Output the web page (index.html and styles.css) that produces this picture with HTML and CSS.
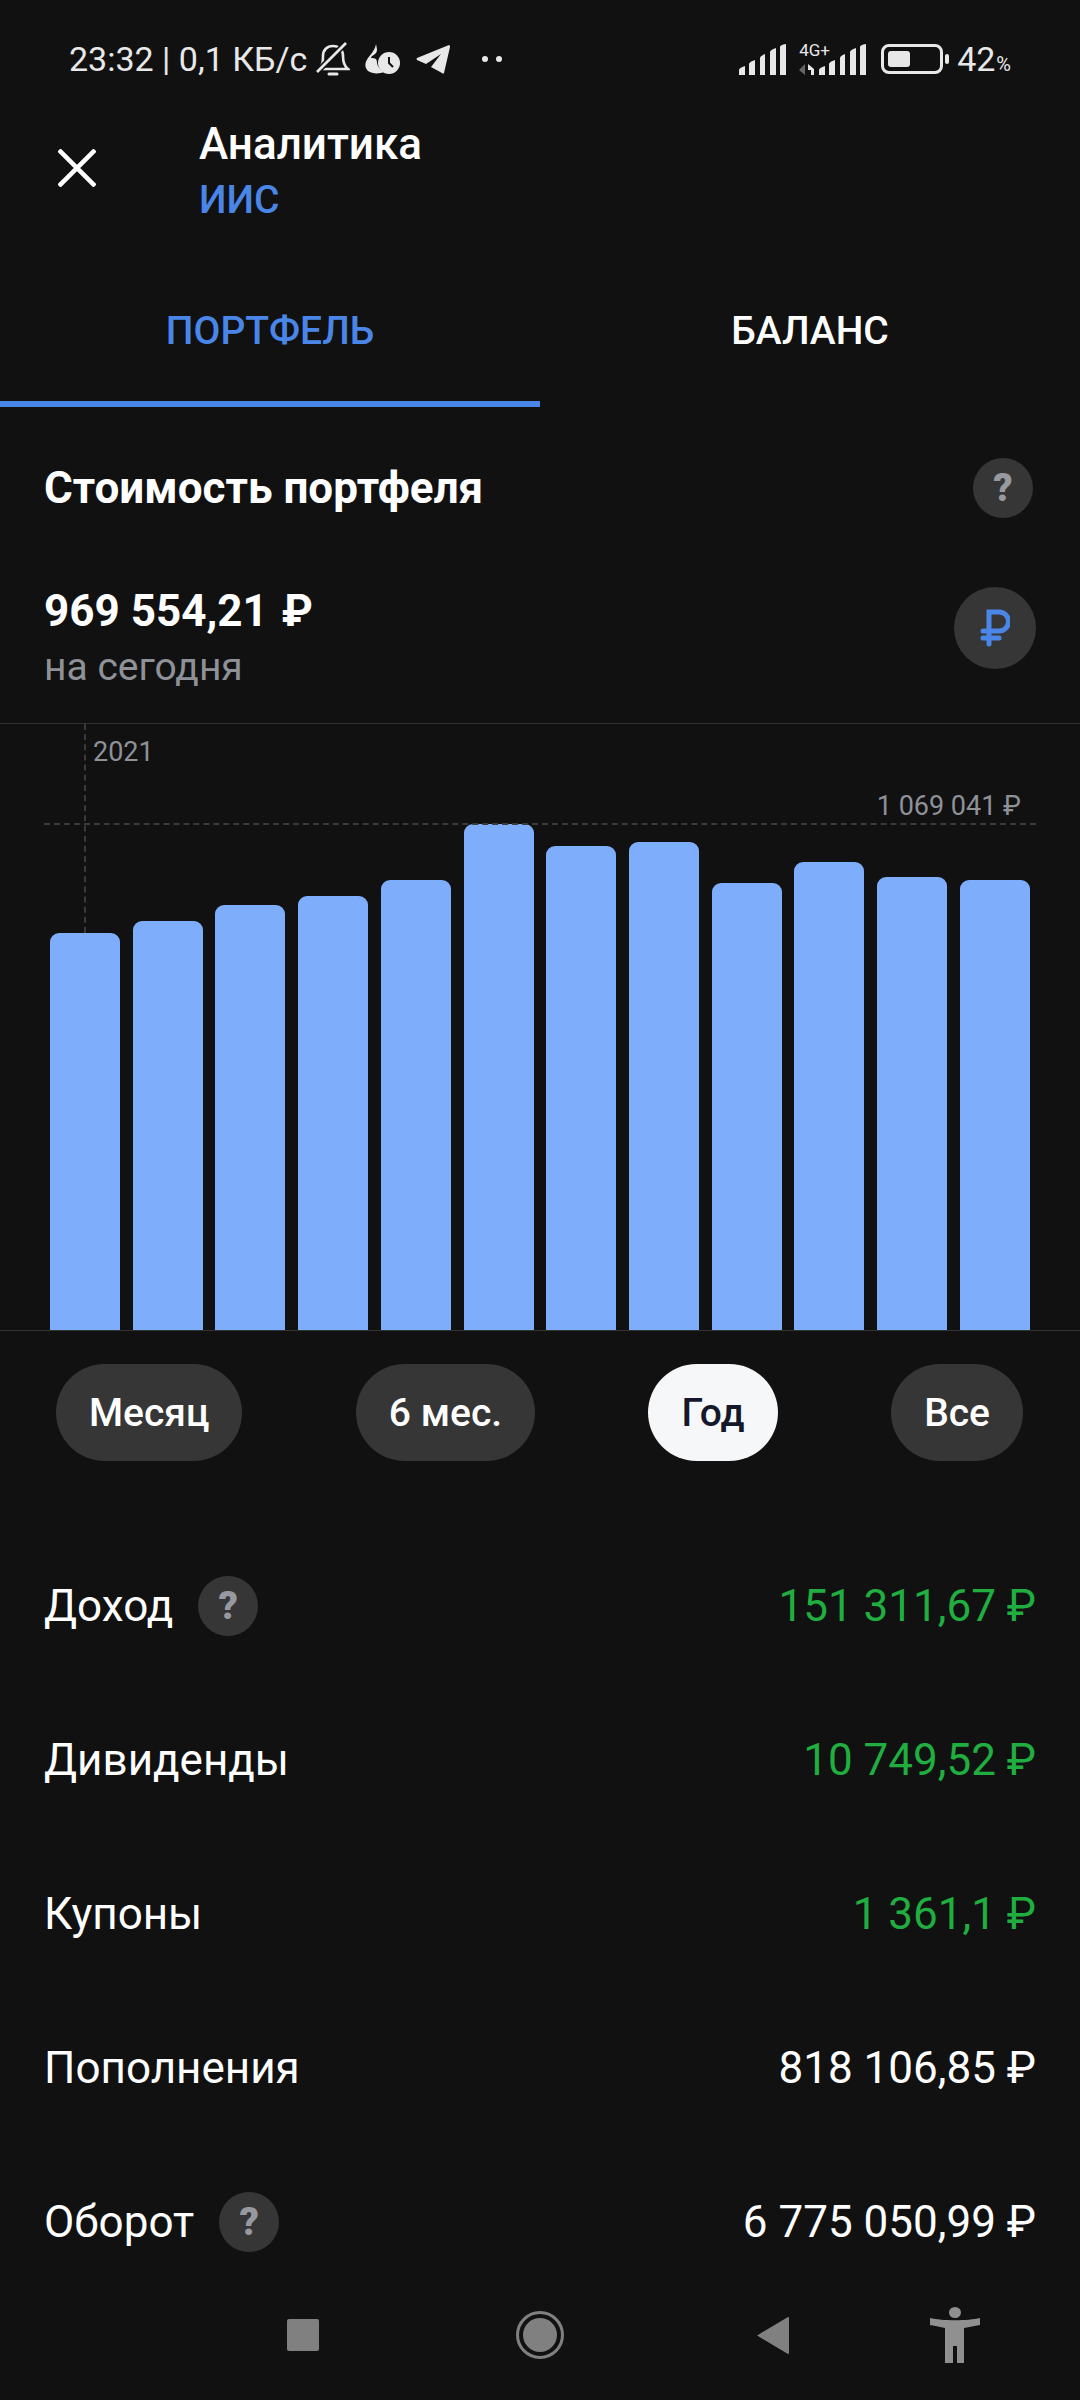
FILE: index.html
```html
<!DOCTYPE html>
<html lang="ru">
<head>
    <meta charset="UTF-8">
    <meta name="viewport" content="width=device-width, initial-scale=1.0">
    <title>Аналитика</title>
    <link rel="stylesheet" href="styles.css">
</head>
<body>
    <div class="status">
        <div class="status-left">
            <span class="status-text">23:32 | 0,1 КБ/с</span>
            <svg class="ic-bell" width="34" height="35" viewBox="0 0 34 35" fill="none" stroke="#e8e8e8" stroke-width="2.6">
                <path d="M3 27 C7 23 7 19 7 14 C7 8 11 4 17 4 C23 4 27 8 27 14 C27 20 28 24 32 27 Z"/>
                <path d="M13 32 H21" stroke-width="3" stroke-linecap="round"/>
                <path d="M1 30 L30 1" stroke="#111112" stroke-width="6"/>
                <path d="M1 30 L30 1"/>
            </svg>
            <svg class="ic-drops" width="36" height="30" viewBox="0 0 36 30">
                <path d="M11 0 C12 5 13 7 10 10 C6 13 5 14 7 14 C12 14 12 17 12 19 C13 24 16 26 19 28 C15 30 7 30 3 27 C-1 23 0 18 3 14 C6 10 10 6 11 0 Z" fill="#e8e8e8"/>
                <circle cx="24" cy="19" r="11" fill="#e8e8e8"/>
                <path d="M24 13 V19 L28 23" fill="none" stroke="#111112" stroke-width="2"/>
            </svg>
            <svg class="ic-plane" width="34" height="29" viewBox="0 0 34 29">
                <path d="M1 13 L33 0 Q34 0 34 2 L28 28 Q27 29 26 28 L15 22 L25 9 L10 19 L1 15 Q0 14 1 13 Z" fill="#e8e8e8"/>
            </svg>
            <span class="dots"><i></i><i></i></span>
        </div>
        <div class="status-right">
            <svg class="ic-signal" width="47" height="31" viewBox="0 0 47 31" fill="#e8e8e8">
                <path d="M0 31 V26 Q0 24 6 22 V31 Z M10 31 V20 Q10 18 16 16 V31 Z M21 31 V14 Q21 12 26 10 V31 Z M31 31 V8 Q31 6 37 4 V31 Z M41 31 V3 Q41 1 47 0 V31 Z"/>
            </svg>
            <div class="net">
                <span class="net-label">4G+</span>
                <svg width="15" height="11" viewBox="0 0 15 11">
                    <path d="M0 6 L6 0 V11 Z" fill="#666"/>
                    <path d="M9 0 L15 5 V11 H12 V6 H9 Z" fill="#e8e8e8"/>
                </svg>
            </div>
            <svg class="ic-signal" width="47" height="31" viewBox="0 0 47 31" fill="#e8e8e8">
                <path d="M0 31 V26 Q0 24 6 22 V31 Z M10 31 V20 Q10 18 16 16 V31 Z M21 31 V14 Q21 12 26 10 V31 Z M31 31 V8 Q31 6 37 4 V31 Z M41 31 V3 Q41 1 47 0 V31 Z"/>
            </svg>
            <div class="battery"><div class="battery-fill"></div></div>
            <div class="battery-tip"></div>
            <span class="status-text batt-num">42<small>%</small></span>
        </div>
    </div>

    <div class="header">
        <svg class="close" width="38" height="38" viewBox="0 0 38 38" stroke="#fff" stroke-width="4.5">
            <path d="M1 1 L37 37 M37 1 L1 37"/>
        </svg>
        <div class="header-text">
            <div class="title">Аналитика</div>
            <div class="subtitle">ИИС</div>
        </div>
    </div>

    <div class="tabs">
        <div class="tab active">ПОРТФЕЛЬ</div>
        <div class="tab">БАЛАНС</div>
    </div>

    <div class="section-head">
        <h2>Стоимость портфеля</h2>
        <div class="help">?</div>
    </div>

    <div class="summary">
        <div>
            <div class="total">969 554,21 <span class="total-rub">₽</span></div>
            <div class="muted">на сегодня</div>
        </div>
        <div class="currency">
            <svg width="30" height="38" viewBox="0 0 30 38" fill="none" stroke="#4a86e8" stroke-width="5" stroke-linecap="round">
                <path d="M9 35 V3 H19 A9.5 9.5 0 0 1 19 22 H3 M3 29 H19"/>
            </svg>
        </div>
    </div>

    <div class="chart">
        <div class="v-line"></div>
        <div class="h-line"></div>
        <span class="year">2021</span>
        <span class="max">1 069 041 ₽</span>
        <div class="bars">
            <div class="bar" style="height: 397px"></div>
            <div class="bar" style="height: 409px"></div>
            <div class="bar" style="height: 425px"></div>
            <div class="bar" style="height: 434px"></div>
            <div class="bar" style="height: 450px"></div>
            <div class="bar" style="height: 506px"></div>
            <div class="bar" style="height: 484px"></div>
            <div class="bar" style="height: 488px"></div>
            <div class="bar" style="height: 447px"></div>
            <div class="bar" style="height: 468px"></div>
            <div class="bar" style="height: 453px"></div>
            <div class="bar" style="height: 450px"></div>
        </div>
    </div>

    <div class="periods">
        <div class="pill">Месяц</div>
        <div class="pill">6 мес.</div>
        <div class="pill selected">Год</div>
        <div class="pill">Все</div>
    </div>

    <div class="rows">
        <div class="row">
            <div class="row-label">Доход <div class="help">?</div></div>
            <div class="amount green">151 311,67 ₽</div>
        </div>
        <div class="row">
            <div class="row-label">Дивиденды</div>
            <div class="amount green">10 749,52 ₽</div>
        </div>
        <div class="row">
            <div class="row-label">Купоны</div>
            <div class="amount green">1 361,1 ₽</div>
        </div>
        <div class="row">
            <div class="row-label">Пополнения</div>
            <div class="amount">818 106,85 ₽</div>
        </div>
        <div class="row">
            <div class="row-label">Оборот <div class="help">?</div></div>
            <div class="amount">6 775 050,99 ₽</div>
        </div>
    </div>

    <div class="navbar">
        <div class="nav-square"></div>
        <svg class="nav-home" width="48" height="50" viewBox="0 0 48 50">
            <circle cx="24" cy="25" r="22.5" fill="none" stroke="#808080" stroke-width="3"/>
            <circle cx="24" cy="25" r="17" fill="#808080"/>
        </svg>
        <svg class="nav-back" width="32" height="37" viewBox="0 0 32 37">
            <path d="M0 18.5 L31 0 Q32 0 32 1 V36 Q32 37 31 37 Z" fill="#808080"/>
        </svg>
        <svg class="nav-person" width="50" height="56" viewBox="0 0 50 56" fill="#909090">
            <ellipse cx="25" cy="5.5" rx="6" ry="5.5"/>
            <path d="M0 11 C12 14 38 14 50 11 L50 18 C44 19 40 20 34 21 L34 56 L27 56 L27 39 L23 39 L23 56 L15 56 L15 21 C10 20 6 19 0 18 Z"/>
        </svg>
    </div>
</body>
</html>
```

FILE: styles.css
```css
* {
    box-sizing: border-box;
}
body {
    margin: 0;
    width: 1080px;
    height: 2400px;
    overflow: hidden;
    background: #111112;
    color: #fff;
    font-family: Roboto, "Noto Sans", sans-serif;
}

/* status bar */
.status {
    height: 118px;
    padding: 0 69px;
    display: flex;
    justify-content: space-between;
    align-items: center;
}
.status-left, .status-right {
    display: flex;
    align-items: center;
}
.status-text {
    font-size: 34px;
    color: #e8e8e8;
    white-space: nowrap;
}
.ic-bell {
    margin-left: 9px;
}
.ic-drops {
    margin-left: 15px;
}
.ic-plane {
    margin-left: 15px;
}
.dots {
    display: flex;
    gap: 8px;
    margin-left: 32px;
}
.dots i {
    width: 6px;
    height: 6px;
    border-radius: 50%;
    background: #e8e8e8;
}
.net {
    width: 15px;
    height: 31px;
    margin-left: 13px;
    margin-right: 5px;
    display: flex;
    flex-direction: column;
    justify-content: space-between;
}
.net-label {
    font-size: 17px;
    line-height: 13px;
    color: #e8e8e8;
    white-space: nowrap;
}
.battery {
    width: 62px;
    height: 30px;
    margin-left: 15px;
    padding: 4px;
    border: 3px solid #e8e8e8;
    border-radius: 8px;
}
.battery-fill {
    width: 22px;
    height: 100%;
    border-radius: 3px;
    background: #e8e8e8;
}
.battery-tip {
    width: 4px;
    height: 10px;
    margin-left: 2px;
    border-radius: 2px;
    background: #e8e8e8;
}
.batt-num {
    margin-left: 8px;
}
.batt-num small {
    font-size: 20px;
    margin-left: 1px;
}

/* header */
.header {
    height: 152px;
    padding-left: 58px;
    display: flex;
    align-items: flex-start;
}
.close {
    margin-top: 31px;
    margin-right: 103px;
}
.title {
    margin-top: -2px;
    font-size: 44px;
    font-weight: 500;
    line-height: 56px;
}
.subtitle {
    font-size: 39px;
    font-weight: 500;
    line-height: 56px;
    color: #4a86e8;
}

/* tabs */
.tabs {
    height: 137px;
    display: flex;
}
.tab {
    flex: 1;
    padding-top: 39px;
    text-align: center;
    font-size: 39px;
    font-weight: 500;
    line-height: 44px;
}
.tab.active {
    color: #4a86e8;
    border-bottom: 6px solid #4a86e8;
}

/* portfolio summary */
.section-head {
    height: 162px;
    padding: 0 47px 0 44px;
    display: flex;
    justify-content: space-between;
    align-items: center;
}
.section-head h2 {
    margin: 0;
    font-size: 44px;
    font-weight: 700;
}
.help {
    width: 60px;
    height: 60px;
    border-radius: 50%;
    background: #363636;
    color: #96999f;
    font-size: 38px;
    font-weight: 900;
    display: flex;
    justify-content: center;
    align-items: center;
}
.summary {
    height: 155px;
    padding: 0 44px;
    display: flex;
    justify-content: space-between;
    align-items: flex-start;
    border-bottom: 1px solid #333;
}
.total {
    margin-top: 14px;
    font-size: 44px;
    font-weight: 700;
    line-height: 56px;
}
.total-rub {
    margin-left: 3px;
}
.muted {
    font-size: 39px;
    line-height: 56px;
    color: #8e9197;
}
.currency {
    width: 82px;
    height: 82px;
    margin-top: 18px;
    border-radius: 50%;
    background: #363636;
    display: flex;
    justify-content: center;
    align-items: center;
}

/* chart */
.chart {
    position: relative;
    height: 607px;
    border-bottom: 1px solid #333;
}
.v-line {
    position: absolute;
    left: 84px;
    top: 0;
    height: 209px;
    border-left: 2px dashed #3a3a3a;
}
.h-line {
    position: absolute;
    left: 44px;
    right: 44px;
    top: 99px;
    border-top: 2px dashed #3a3a3a;
}
.year {
    position: absolute;
    left: 93px;
    top: 12px;
    font-size: 27px;
    line-height: 32px;
    color: #8e9197;
}
.max {
    position: absolute;
    right: 59px;
    top: 66px;
    font-size: 27px;
    line-height: 32px;
    color: #8e9197;
}
.bars {
    height: 100%;
    padding: 0 50px;
    display: flex;
    justify-content: space-between;
    align-items: flex-end;
}
.bar {
    width: 70px;
    border-radius: 9px 9px 0 0;
    background: #7eaefb;
}

/* period switch */
.periods {
    height: 198px;
    padding: 33px 57px 0 56px;
    display: flex;
    justify-content: space-between;
    align-items: flex-start;
}
.pill {
    height: 97px;
    padding: 0 33px;
    border-radius: 49px;
    background: #363636;
    font-size: 39px;
    font-weight: 500;
    display: flex;
    align-items: center;
}
.pill.selected {
    background: #f6f7f9;
    color: #14182a;
}

/* rows */
.rows {
    height: 770px;
}
.row {
    height: 154px;
    padding: 0 44px;
    display: flex;
    justify-content: space-between;
    align-items: center;
}
.row-label {
    font-size: 44px;
    display: flex;
    align-items: center;
    gap: 25px;
}
.amount {
    font-size: 44px;
}
.green {
    color: #1fae3f;
}

/* navigation bar */
.navbar {
    position: relative;
    height: 101px;
}
.nav-square {
    position: absolute;
    left: 287px;
    top: 20px;
    width: 32px;
    height: 32px;
    border-radius: 2px;
    background: #808080;
}
.nav-home {
    position: absolute;
    left: 516px;
    top: 11px;
}
.nav-back {
    position: absolute;
    left: 757px;
    top: 18px;
}
.nav-person {
    position: absolute;
    left: 930px;
    top: 8px;
}
```
